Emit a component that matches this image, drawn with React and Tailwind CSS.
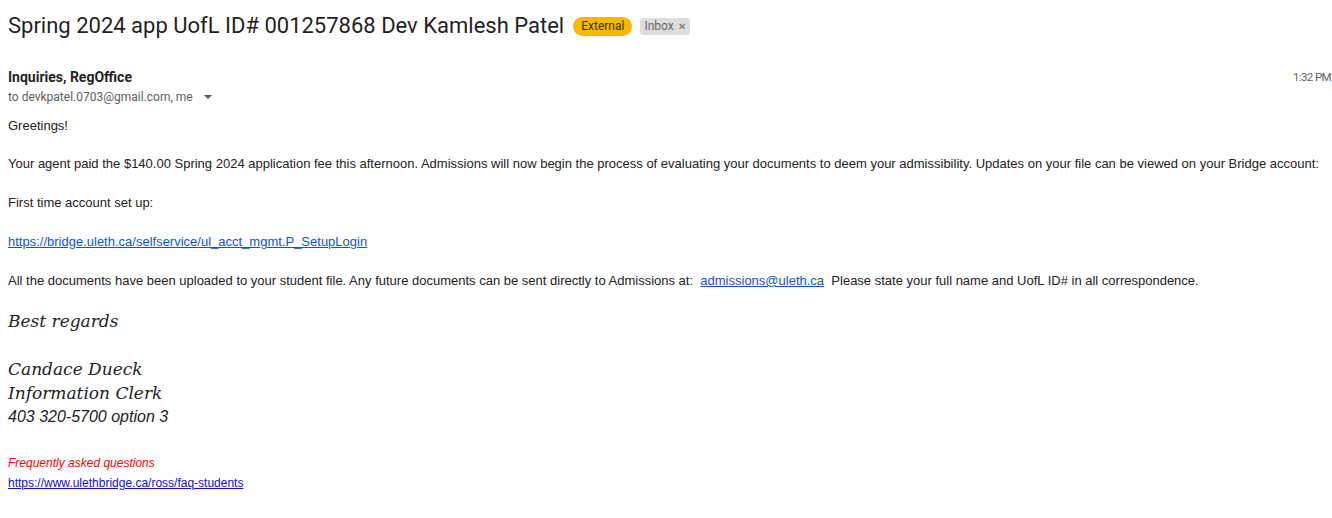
const body = "font-['Liberation_Sans',Arial,sans-serif] text-[13px] text-[#222]";
const script = "font-['Lucida_Calligraphy','DejaVu_Serif',cursive] italic text-[#222]";

export default function App() {
  return (
    <div className="w-[1332px] h-[518px] overflow-hidden bg-white font-['Roboto',sans-serif]">
      <div className="flex items-center gap-2 pl-2 pt-[12px]">
        <h1 className="text-[22px] leading-[28px] text-[#1f1f1f] font-normal">
          Spring 2024 app UofL ID# 001257868 Dev Kamlesh Patel
        </h1>
        <span className="ml-[1px] rounded-full bg-[#f6b800] px-2 text-[12px] leading-[19px] text-[#3c2d00]">External</span>
        <span className="flex items-center gap-1 rounded-[3px] bg-[#dddddd] px-1 text-[12px] leading-[17px] text-[#666]">
          Inbox <span className="text-[10px]">✕</span>
        </span>
      </div>

      <div className="flex justify-between pl-2 pt-[27px]">
        <div>
          <div className="text-[14px] font-bold text-[#1f1f1f] leading-[20px]">Inquiries, RegOffice</div>
          <div className="flex items-center gap-1 text-[12px] text-[#5e5e5e] leading-[20px]">
            to devkpatel.0703@gmail.com, me
            <svg width="14" height="14" viewBox="0 0 14 14" className="ml-1"><path d="M3 5h8l-4 4z" fill="#555" /></svg>
          </div>
        </div>
        <div className="text-[11.5px] text-[#5e5e5e] leading-[20px] whitespace-nowrap tracking-[-0.6px] pr-[1px]">1:32 PM</div>
      </div>

      <div className={`pl-2 pt-[9px] ${body} leading-[20px]`}>
        <p>Greetings!</p>
        <p className="mt-[18px]">
          Your agent paid the $140.00 Spring 2024 application fee this afternoon. Admissions will now begin the process of evaluating your documents to deem your admissibility. Updates on your file can be viewed on your Bridge account:
        </p>
        <p className="mt-[19px]">First time account set up:</p>
        <p className="mt-[19px]">
          <a href="#" className="text-[#1155cc] underline">https://bridge.uleth.ca/selfservice/ul_acct_mgmt.P_SetupLogin</a>
        </p>
        <p className="mt-[19px]">
          All the documents have been uploaded to your student file. Any future documents can be sent directly to Admissions at:&nbsp;{" "}
          <a href="#" className="text-[#1155cc] underline">admissions@uleth.ca</a>&nbsp;{" "}
          Please state your full name and UofL ID# in all correspondence.
        </p>
      </div>

      <div className="pl-2 pt-[18px]">
        <div className={`${script} text-[17px] leading-[24px]`}>Best regards</div>
        <div className={`${script} text-[17px] leading-[24px] mt-[24px]`}>Candace Dueck</div>
        <div className={`${script} text-[17px] leading-[24px]`}>Information Clerk</div>
        <div className="font-['Liberation_Sans',Arial,sans-serif] italic text-[16px] leading-[24px] text-[#222]">403 320-5700 option 3</div>
        <div className="font-['Liberation_Sans',Arial,sans-serif] italic text-[12px] leading-[20px] text-[#ff0000] mt-[24px]">Frequently asked questions</div>
        <a href="#" className="block font-['Liberation_Sans',Arial,sans-serif] text-[12px] leading-[20px] text-[#1111cc] underline">https://www.ulethbridge.ca/ross/faq-students</a>
      </div>
    </div>
  );
}
